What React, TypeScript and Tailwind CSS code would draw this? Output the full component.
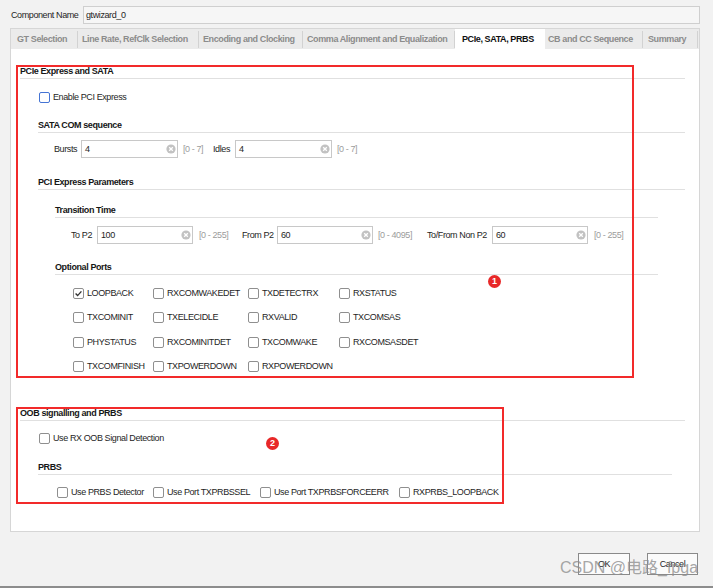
import clsx from "clsx"

const tabs = [
  { name: "GT Selection", w: "w-[67px] pl-[6px] border-r", active: false },
  { name: "Line Rate, RefClk Selection", w: "w-[121px] pl-[4px] border-r", active: false },
  { name: "Encoding and Clocking", w: "w-[104px] pl-[4px] border-r", active: false },
  { name: "Comma Alignment and Equalization", w: "w-[152px] pl-[4px] border-r", active: false },
  { name: "PCIe, SATA, PRBS", w: "w-[90px] pl-[7px]", active: true },
  { name: "CB and CC Sequence", w: "w-[98px] pl-[3px] border-r", active: false },
  { name: "Summary", w: "w-[55px] pl-[5px] border-r", active: false },
]

const ports = [
  ["LOOPBACK", "RXCOMWAKEDET", "TXDETECTRX", "RXSTATUS"],
  ["TXCOMINIT", "TXELECIDLE", "RXVALID", "TXCOMSAS"],
  ["PHYSTATUS", "RXCOMINITDET", "TXCOMWAKE", "RXCOMSASDET"],
  ["TXCOMFINISH", "TXPOWERDOWN", "RXPOWERDOWN", ""],
]

function Box({ checked, focus }: { checked?: boolean; focus?: boolean }) {
  return (
    <span
      className={clsx(
        "w-[11px] h-[11px] rounded-[2px] bg-white flex items-center justify-center shrink-0",
        focus ? "border-[1.5px] border-[#4574d4]" : "border border-[#8f8f8f]"
      )}
    >
      {checked && (
        <svg width="9" height="9" viewBox="0 0 9 9">
          <path d="M1.6 4.6 L3.6 6.6 L7.4 2.4" fill="none" stroke="#333" strokeWidth="1.4" />
        </svg>
      )}
    </span>
  )
}

function Check({ label, checked, focus, cls }: { label: string; checked?: boolean; focus?: boolean; cls?: string }) {
  return (
    <div className={clsx("flex items-center gap-[3px]", cls)}>
      <Box checked={checked} focus={focus} />
      <span className="text-[#1e1e1e] whitespace-nowrap">{label}</span>
    </div>
  )
}

function Field({ value, w }: { value: string; w: string }) {
  return (
    <div className={clsx("h-[18px] border border-[#c8c8c8] bg-white flex items-center pl-[3px] shrink-0", w)}>
      <span className="text-[#1e1e1e]">{value}</span>
      <svg className="ml-auto mr-[1px]" width="10" height="10" viewBox="0 0 10 10">
        <circle cx="5" cy="5" r="4.6" fill="#c2c2c2" />
        <path d="M3.2 3.2 L6.8 6.8 M6.8 3.2 L3.2 6.8" stroke="#fff" strokeWidth="1.3" />
      </svg>
    </div>
  )
}

function Head({ children, cls }: { children: string; cls: string }) {
  return (
    <div className={clsx("h-[14px] leading-[13px] font-bold text-[#161616] border-b border-[#e0e0e0]", cls)}>
      {children}
    </div>
  )
}

function Range({ children, cls }: { children: string; cls: string }) {
  return <span className={clsx("text-[#9c9c9c] whitespace-nowrap shrink-0", cls)}>{children}</span>
}

function Label({ children, cls }: { children: string; cls: string }) {
  return <span className={clsx("text-[#1e1e1e] whitespace-nowrap shrink-0", cls)}>{children}</span>
}

export default function App() {
  return (
    <div className="relative w-[713px] h-[588px] overflow-hidden bg-[#f2f2f2] text-[9px] tracking-[-0.4px] leading-none font-['Liberation_Sans',Arial,sans-serif] flex flex-col">
      {/* component name */}
      <div className="flex items-center pt-[6px]">
        <span className="ml-[11px] w-[72px] whitespace-nowrap text-[#1e1e1e]">Component Name</span>
        <div className="w-[617px] h-[18px] border border-[#cfcfcf] bg-[#f6f6f6] flex items-center pl-[2px] text-[#1e1e1e]">
          gtwizard_0
        </div>
      </div>

      {/* tabs */}
      <div className="ml-[10px] mt-[4px] w-[690px] h-[21px] bg-[#ebebeb] border-t border-l border-r border-[#d6d6d6] flex items-center">
        {tabs.map((t) => (
          <div
            key={t.name}
            className={clsx(
              "flex items-center font-bold whitespace-nowrap overflow-hidden border-[#d2d2d2]",
              t.w,
              t.active ? "h-full bg-white text-[#111]" : "h-[17px] text-[#8c8c8c]"
            )}
          >
            {t.name}
          </div>
        ))}
      </div>

      {/* panel */}
      <div className="ml-[10px] w-[690px] h-[483px] bg-white border-l border-r border-b border-[#d6d6d6] flex flex-col">
        <Head cls="mt-[16px] ml-[9px] w-[665px]">PCIe Express and SATA</Head>
        <Check cls="mt-[10px] ml-[28px] h-[16px]" label="Enable PCI Express" focus />

        <Head cls="mt-[14px] ml-[27px] w-[647px]">SATA COM sequence</Head>
        <div className="mt-[7px] ml-[43px] h-[18px] flex items-center">
          <Label cls="w-[27px]">Bursts</Label>
          <Field value="4" w="w-[97px]" />
          <Range cls="w-[35px] pl-[5px]">[0 - 7]</Range>
          <Label cls="w-[22px]">Idles</Label>
          <Field value="4" w="w-[97px]" />
          <Range cls="pl-[5px]">[0 - 7]</Range>
        </div>

        <Head cls="mt-[18px] ml-[27px] w-[647px]">PCI Express Parameters</Head>
        <Head cls="mt-[14px] ml-[44px] w-[603px]">Transition Time</Head>
        <div className="mt-[8px] ml-[60px] h-[18px] flex items-center">
          <Label cls="w-[26px]">To P2</Label>
          <Field value="100" w="w-[96px]" />
          <Range cls="w-[49px] pl-[6px]">[0 - 255]</Range>
          <Label cls="w-[35px]">From P2</Label>
          <Field value="60" w="w-[96px]" />
          <Range cls="w-[54px] pl-[5px]">[0 - 4095]</Range>
          <Label cls="w-[65px]">To/From Non P2</Label>
          <Field value="60" w="w-[96px]" />
          <Range cls="pl-[6px]">[0 - 255]</Range>
        </div>

        <Head cls="mt-[17px] ml-[44px] w-[603px]">Optional Ports</Head>
        <div className="mt-[6px] ml-[62px] grid grid-cols-[80px_95px_91px_100px] auto-rows-[24.5px]">
          {ports.flat().map((p, i) =>
            p ? (
              <Check key={p} label={p} checked={i === 0} cls="h-full" />
            ) : (
              <div key={"e" + i} />
            )
          )}
        </div>

        <Head cls="mt-[28px] ml-[9px] w-[665px]">OOB signalling and PRBS</Head>
        <Check cls="mt-[9px] ml-[28px] h-[16px]" label="Use RX OOB Signal Detection" />

        <Head cls="mt-[15px] ml-[27px] w-[634px]">PRBS</Head>
        <div className="mt-[9px] ml-[46px] h-[16px] flex items-center">
          <Check cls="w-[96px]" label="Use PRBS Detector" />
          <Check cls="w-[107px]" label="Use Port TXPRBSSEL" />
          <Check cls="w-[139px]" label="Use Port TXPRBSFORCEERR" />
          <Check label="RXPRBS_LOOPBACK" />
        </div>
      </div>

      {/* buttons */}
      <div className="flex-1 flex justify-end items-start pt-[21px] pr-[15px] gap-[17px]">
        <button className="w-[52px] h-[22px] border border-[#8a8a8a] bg-[#fbfbfb] text-[#1e1e1e]">OK</button>
        <button className="w-[51px] h-[22px] border border-[#8a8a8a] bg-[#fbfbfb] text-[#1e1e1e]">Cancel</button>
      </div>
      <div className="h-[2px] bg-[#8d8d8d]" />

      {/* annotations */}
      <div className="absolute left-[16px] top-[65px] w-[618px] h-[313px] border-2 border-[#f22a2a]" />
      <div className="absolute left-[16px] top-[407px] w-[488px] h-[97px] border-2 border-[#f22a2a]" />
      <div className="absolute left-[488px] top-[275px] w-[13px] h-[13px] rounded-full bg-[#e82828] text-white text-[9px] tracking-normal font-bold flex items-center justify-center">
        1
      </div>
      <div className="absolute left-[266px] top-[437px] w-[13px] h-[13px] rounded-full bg-[#e82828] text-white text-[9px] tracking-normal font-bold flex items-center justify-center">
        2
      </div>
      <div className="absolute left-[560px] top-[560px] text-[16px] tracking-normal leading-none text-[#8f8f8f]/80 whitespace-nowrap font-['Liberation_Sans','Noto_Sans_CJK_SC',sans-serif]">
        CSDN @电路_fpga
      </div>
    </div>
  )
}
